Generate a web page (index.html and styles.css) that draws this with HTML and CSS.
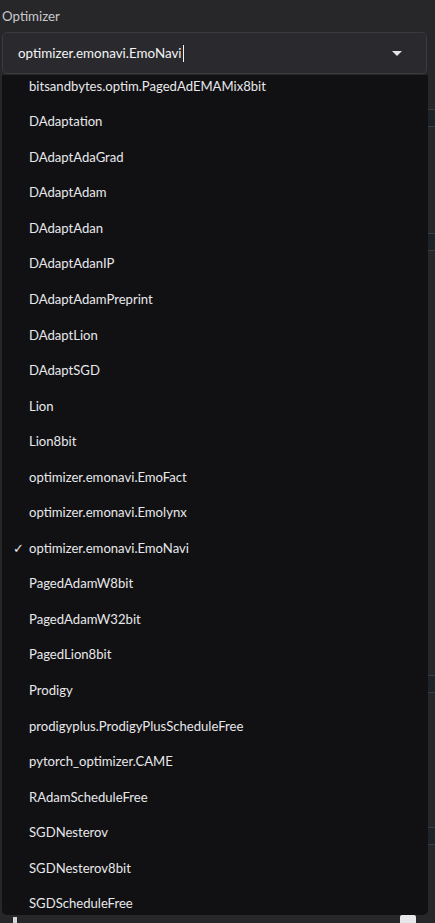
FILE: index.html
```html
<!DOCTYPE html>
<html>
<head>
<meta charset="utf-8">
<link rel="stylesheet" href="styles.css">
</head>
<body>
<div class="page">
  <div class="bg-lines">
    <div class="bgl l1"></div>
    <div class="bgl l2"></div>
    <div class="bgl l3"></div>
    <div class="bgl l4"></div>
  </div>
  <div class="field">
    <label class="label">Optimizer</label>
    <div class="input">
      <span class="value">optimizer.emonavi.EmoNavi</span><span class="caret"></span>
      <svg class="arrow" width="10" height="6" viewBox="0 0 10 6"><path d="M0 0 L10 0 L5 5 Z" fill="#e4e4e7"/></svg>
    </div>
  </div>
  <div class="dropdown">
    <ul class="options">
      <li>bitsandbytes.optim.PagedAdEMAMix8bit</li>
      <li>DAdaptation</li>
      <li>DAdaptAdaGrad</li>
      <li>DAdaptAdam</li>
      <li>DAdaptAdan</li>
      <li>DAdaptAdanIP</li>
      <li>DAdaptAdamPreprint</li>
      <li>DAdaptLion</li>
      <li>DAdaptSGD</li>
      <li>Lion</li>
      <li>Lion8bit</li>
      <li>optimizer.emonavi.EmoFact</li>
      <li>optimizer.emonavi.Emolynx</li>
      <li class="selected"><span class="check">✓</span>optimizer.emonavi.EmoNavi</li>
      <li>PagedAdamW8bit</li>
      <li>PagedAdamW32bit</li>
      <li>PagedLion8bit</li>
      <li>Prodigy</li>
      <li>prodigyplus.ProdigyPlusScheduleFree</li>
      <li>pytorch_optimizer.CAME</li>
      <li>RAdamScheduleFree</li>
      <li>SGDNesterov</li>
      <li>SGDNesterov8bit</li>
      <li>SGDScheduleFree</li>
    </ul>
  </div>
  <div class="bottom-peek">
    <span class="peek-left"></span>
    <span class="peek-right"></span>
  </div>
</div>
</body>
</html>
```
FILE: styles.css
```css
html, body {
  margin: 0;
  padding: 0;
  background: #27272a;
}
body {
  font-family: "Lato", "Noto Sans", sans-serif;
  color: #e4e4e7;
  width: 435px;
  height: 923px;
  overflow: hidden;
}
.page {
  position: relative;
  width: 435px;
  height: 923px;
}
.field {
  padding: 6px 8px 0 2px;
}
.label {
  display: block;
  font-size: 13.3px;
  line-height: 20px;
  color: #c7c7cc;
  margin-bottom: 6px;
}
.input {
  position: relative;
  height: 40px;
  border: 1px solid #3a3a3f;
  border-radius: 5px;
  background: #2a2a2e;
  display: flex;
  align-items: center;
  padding-left: 15px;
  font-size: 13.4px;
}
.value {
  color: #f4f4f5;
}
.caret {
  display: inline-block;
  width: 1px;
  height: 17px;
  background: #f4f4f5;
  margin-left: 1px;
}
.arrow {
  position: absolute;
  right: 24px;
  top: 18px;
}
.dropdown {
  position: absolute;
  top: 75px;
  left: 2px;
  width: 426px;
  height: 840px;
  background: #111113;
  border-radius: 0 0 5px 5px;
  overflow: hidden;
}
.options {
  list-style: none;
  margin: -6.3px 0 0 0;
  padding: 0;
}
.options li {
  position: relative;
  height: 35.55px;
  line-height: 35.55px;
  padding-left: 27px;
  font-size: 13.1px;
  color: #e8e8eb;
  white-space: nowrap;
}
.check {
  position: absolute;
  left: 11px;
  font-size: 13px;
}
.bgl {
  position: absolute;
  right: 0;
  width: 7px;
  height: 16px;
  background: #1e2329;
  border-top: 1px solid #3b3d42;
  border-bottom: 1px solid #3b3d42;
}
.l1 { top: 109px; }
.l2 { top: 233px; }
.l3 { top: 675px; }
.l4 { top: 827px; }
.bottom-peek .peek-right {
  position: absolute;
  left: 400px;
  top: 915px;
  width: 16px;
  height: 8px;
  background: #e7e7ea;
  border-radius: 2px 2px 0 0;
}
.bottom-peek .peek-left {
  position: absolute;
  left: 13px;
  top: 917px;
  width: 4px;
  height: 6px;
  background: #d4d4d8;
}
```
